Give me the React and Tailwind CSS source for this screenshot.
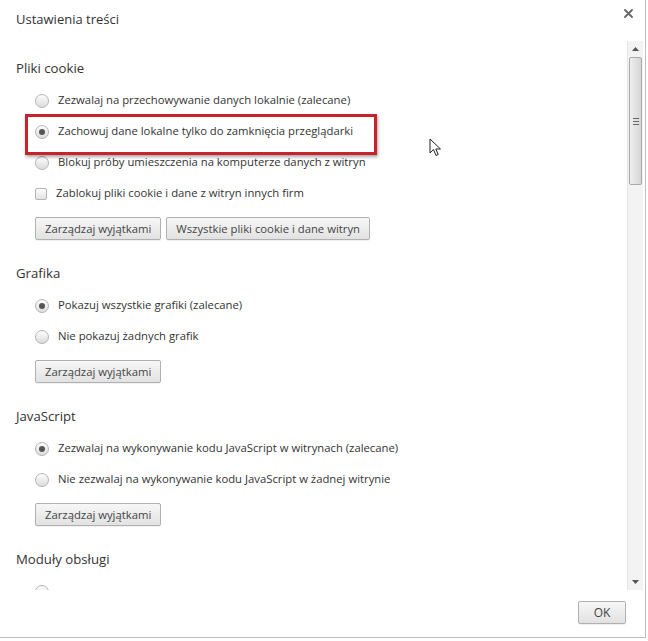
import React from "react";

const Radio = ({ checked }) => (
  <span className="relative inline-block w-[14px] h-[14px] rounded-full border border-[#b4b4b4] bg-gradient-to-b from-[#fdfdfd] to-[#dcdcdc] shrink-0">
    {checked && (
      <span className="absolute left-[3px] top-[3px] w-[6px] h-[6px] rounded-full bg-[#555]" />
    )}
  </span>
);

const Checkbox = () => (
  <span className="inline-block w-[12px] h-[12px] rounded-[2px] border border-[#b4b4b4] bg-gradient-to-b from-[#fdfdfd] to-[#e2e2e2] shrink-0" />
);

const Button = ({ children, className = "" }) => (
  <button
    className={`h-[23px] px-[9px] rounded-[2px] border border-[#b0b0b0] bg-gradient-to-b from-[#f7f7f7] to-[#e2e2e2] text-[11.3px] text-[#444] leading-none shadow-[0_1px_0_rgba(0,0,0,0.05)] ${className}`}
  >
    {children}
  </button>
);

const Option = ({ type = "radio", checked, label }) => (
  <div className="h-[31px] flex items-center pl-[35px] gap-[9px]">
    {type === "radio" ? <Radio checked={checked} /> : <Checkbox />}
    {label && <span className="text-[11.3px] text-[#333] whitespace-nowrap">{label}</span>}
  </div>
);

const Section = ({ title, children }) => (
  <div className="mb-[24px]">
    <div className="h-[18px] pl-4 text-[13.2px] leading-[18px] text-[#333] mb-2">{title}</div>
    {children}
  </div>
);

const Buttons = ({ children }) => (
  <div className="flex gap-[5px] pl-[35px] mt-[8px]">{children}</div>
);

export default function App() {
  return (
    <div
      className="w-[648px] h-[641px] bg-white overflow-hidden"
      style={{ fontFamily: '"Open Sans", "Noto Sans", sans-serif' }}
    >
      <div className="relative w-[646px] h-[638px] bg-white border-r border-b border-[#bdbdbd] flex flex-col">
        <div className="h-[41px] flex items-start justify-between pl-4 pr-[12px]">
          <span className="mt-[10px] text-[13px] text-[#333]">Ustawienia treści</span>
          <svg className="mt-[9px]" width="9" height="9" viewBox="0 0 9 9">
            <path d="M1 1 L8 8 M8 1 L1 8" stroke="#666" strokeWidth="1.8" strokeLinecap="round" />
          </svg>
        </div>

        <div className="relative flex h-[549px]">
          <div className="relative flex-1 overflow-hidden pt-[18px]">
            <Section title="Pliki cookie">
              <Option label="Zezwalaj na przechowywanie danych lokalnie (zalecane)" />
              <Option checked label="Zachowuj dane lokalne tylko do zamknięcia przeglądarki" />
              <Option label="Blokuj próby umieszczenia na komputerze danych z witryn" />
              <Option type="checkbox" label="Zablokuj pliki cookie i dane z witryn innych firm" />
              <Buttons>
                <Button>Zarządzaj wyjątkami</Button>
                <Button>Wszystkie pliki cookie i dane witryn</Button>
              </Buttons>
            </Section>
            <Section title="Grafika">
              <Option checked label="Pokazuj wszystkie grafiki (zalecane)" />
              <Option label="Nie pokazuj żadnych grafik" />
              <Buttons>
                <Button>Zarządzaj wyjątkami</Button>
              </Buttons>
            </Section>
            <Section title="JavaScript">
              <Option checked label="Zezwalaj na wykonywanie kodu JavaScript w witrynach (zalecane)" />
              <Option label="Nie zezwalaj na wykonywanie kodu JavaScript w żadnej witrynie" />
              <Buttons>
                <Button>Zarządzaj wyjątkami</Button>
              </Buttons>
            </Section>
            <Section title="Moduły obsługi">
              <Option />
            </Section>

            {/* red annotation box */}
            <div className="absolute left-[25px] top-[73px] w-[352px] h-[41px] border-[3px] border-[#c8232b] shadow-[1px_2px_3px_rgba(0,0,0,0.35)]" />

            {/* mouse cursor */}
            <svg className="absolute left-[429px] top-[97px]" width="14" height="20" viewBox="0 0 14 20">
              <path d="M1 1 L1 15 L4.5 11.5 L7 17.5 L9.2 16.5 L6.8 11 L11.5 11 Z" fill="white" stroke="#222" strokeWidth="1" strokeLinejoin="round" />
            </svg>
          </div>

          {/* scrollbar */}
          <div className="w-[16px] mr-[2px] bg-[#f3f3f3] flex flex-col border-l border-[#e6e6e6]">
            <div className="h-[16px] flex items-center justify-center">
              <svg width="7" height="4" viewBox="0 0 7 4"><path d="M0 4 L3.5 0 L7 4 Z" fill="#555" /></svg>
            </div>
            <div className="mx-[1px] h-[128px] rounded-[2px] border border-[#a8a8a8] bg-gradient-to-r from-[#f0f0f0] via-[#e2e2e2] to-[#d6d6d6] flex items-center justify-center">
              <div className="flex flex-col gap-[2px]">
                <span className="block w-[6px] h-px bg-[#666]" />
                <span className="block w-[6px] h-px bg-[#666]" />
                <span className="block w-[6px] h-px bg-[#666]" />
              </div>
            </div>
            <div className="flex-1" />
            <div className="h-[16px] flex items-center justify-center">
              <svg width="7" height="4" viewBox="0 0 7 4"><path d="M0 0 L7 0 L3.5 4 Z" fill="#555" /></svg>
            </div>
          </div>
        </div>

        <div className="flex-1 flex items-start justify-end pr-[19px] pt-[11px]">
          <Button className="w-[48px] px-0 text-[12px]">OK</Button>
        </div>
      </div>
    </div>
  );
}
